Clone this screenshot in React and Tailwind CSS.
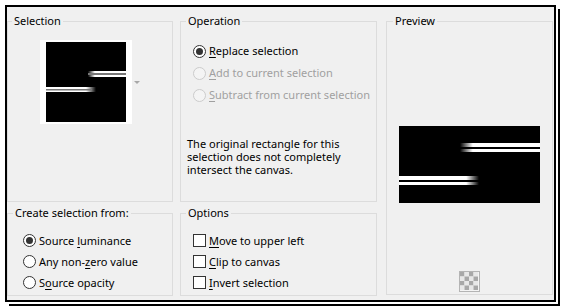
import React from "react";

const font = { fontFamily: '"Noto Sans", "Segoe UI", sans-serif' };

function Radio({ checked, disabled }) {
  return (
    <span
      className={
        "flex items-center justify-center w-[13px] h-[13px] rounded-full border shrink-0 " +
        (disabled ? "border-[#cccccc] bg-[#f4f4f4]" : "border-[#333333] bg-white")
      }
    >
      {checked ? <span className="w-[7px] h-[7px] rounded-full bg-[#333333]" /> : null}
    </span>
  );
}

function Check() {
  return <span className="w-[13px] h-[13px] border border-[#333333] bg-white shrink-0" />;
}

function U({ children }) {
  return <span className="underline underline-offset-[2px] decoration-[1px]">{children}</span>;
}

function Thumb() {
  return (
    <svg width="80" height="80" viewBox="0 0 80 80" className="block">
      <defs>
        <linearGradient id="tfL" x1="0" x2="1">
          <stop offset="0" stopColor="#fff" stopOpacity="0" />
          <stop offset="0.18" stopColor="#fff" stopOpacity="1" />
        </linearGradient>
        <linearGradient id="tfR" x1="0" x2="1">
          <stop offset="0.8" stopColor="#fff" stopOpacity="1" />
          <stop offset="1" stopColor="#fff" stopOpacity="0" />
        </linearGradient>
      </defs>
      <rect width="80" height="80" fill="#000" />
      <rect x="42" y="29" width="38" height="6" fill="url(#tfL)" />
      <rect x="42" y="31" width="38" height="2" fill="#777" />
      <rect x="0" y="45" width="50" height="5" fill="url(#tfR)" />
      <rect x="0" y="47" width="46" height="1.5" fill="#777" />
    </svg>
  );
}

function PreviewImg() {
  return (
    <svg width="141" height="77" viewBox="0 0 141 77" className="block">
      <defs>
        <linearGradient id="pL" x1="0" x2="1">
          <stop offset="0" stopColor="#fff" stopOpacity="0" />
          <stop offset="0.16" stopColor="#fff" stopOpacity="1" />
        </linearGradient>
        <linearGradient id="pR" x1="0" x2="1">
          <stop offset="0.84" stopColor="#fff" stopOpacity="1" />
          <stop offset="1" stopColor="#fff" stopOpacity="0" />
        </linearGradient>
      </defs>
      <rect width="141" height="77" fill="#000" />
      <rect x="61" y="17" width="80" height="4" fill="url(#pL)" />
      <rect x="61" y="23" width="80" height="3" fill="url(#pL)" />
      <rect x="0" y="50" width="80" height="4" fill="url(#pR)" />
      <rect x="0" y="56" width="80" height="3" fill="url(#pR)" />
    </svg>
  );
}

function Checker() {
  const cells = [];
  for (let r = 0; r < 4; r++) {
    for (let c = 0; c < 4; c++) {
      cells.push(
        <rect key={r + "-" + c} x={1 + c * 4.5} y={1 + r * 4.5} width="4.5" height="4.5" fill={(r + c) % 2 === 0 ? "#a8a8a8" : "#e8e8e8"} />
      );
    }
  }
  return (
    <svg width="21" height="21" viewBox="0 0 21 21" className="block">
      <rect x="0.5" y="0.5" width="20" height="20" fill="#f4f4f4" stroke="#b4b4b4" />
      {cells}
    </svg>
  );
}

export default function App() {
  return (
    <div className="w-[561px] h-[307px] bg-white pl-[5px] pt-[5px] text-[11px] leading-[14px] text-black whitespace-nowrap" style={font}>
      <div className="w-[551px] h-[297px] border-2 border-black bg-[#f0f0f0] shadow-[2px_2px_0_0_#fff,4px_4px_0_0_#000] flex pt-[7px]">
        {/* Column 1 */}
        <div className="w-[166px] flex flex-col gap-[4px]">
          <fieldset className="h-[188px] border border-[#dcdcdc]">
            <legend className="ml-[4px] px-[2px]">Selection</legend>
            <div className="flex items-center mt-[12px] ml-[32px]">
              <div className="bg-white px-[6px] py-[2px]">
                <Thumb />
              </div>
              <div className="ml-[2px] w-0 h-0 border-l-[3px] border-r-[3px] border-t-[3px] border-l-transparent border-r-transparent border-t-[#a8a8a8]" />
            </div>
          </fieldset>
          <fieldset className="h-[90px] border border-[#dcdcdc]">
            <legend className="ml-[5px] px-[2px]">Create selection from:</legend>
            <div className="flex flex-col mt-[10px] pl-[15px]">
              <div className="h-[21px] flex items-center gap-[3px]">
                <Radio checked />
                <span>Source <U>l</U>uminance</span>
              </div>
              <div className="h-[21px] flex items-center gap-[3px]">
                <Radio />
                <span>Any non-<U>z</U>ero value</span>
              </div>
              <div className="h-[21px] flex items-center gap-[3px]">
                <Radio />
                <span>S<U>o</U>urce opacity</span>
              </div>
            </div>
          </fieldset>
        </div>

        {/* Column 2 */}
        <div className="w-[197px] ml-[7px] flex flex-col gap-[4px]">
          <fieldset className="h-[188px] border border-[#dcdcdc]">
            <legend className="ml-[5px] px-[2px]">Operation</legend>
            <div className="flex flex-col mt-[12px] pl-[12px]">
              <div className="h-[22px] flex items-center gap-[3px]">
                <Radio checked />
                <span><U>R</U>eplace selection</span>
              </div>
              <div className="h-[22px] flex items-center gap-[3px] text-[#a0a0a0]">
                <Radio disabled />
                <span><U>A</U>dd to current selection</span>
              </div>
              <div className="h-[22px] flex items-center gap-[3px] text-[#a0a0a0]">
                <Radio disabled />
                <span><U>S</U>ubtract from current selection</span>
              </div>
            </div>
            <p className="mt-[31px] pl-[6px] leading-[13px]">
              The original rectangle for this
              <br />
              selection does not completely
              <br />
              intersect the canvas.
            </p>
          </fieldset>
          <fieldset className="h-[90px] border border-[#dcdcdc]">
            <legend className="ml-[5px] px-[2px]">Options</legend>
            <div className="flex flex-col mt-[10px] pl-[12px]">
              <div className="h-[21px] flex items-center gap-[3px]">
                <Check />
                <span><U>M</U>ove to upper left</span>
              </div>
              <div className="h-[21px] flex items-center gap-[3px]">
                <Check />
                <span><U>C</U>lip to canvas</span>
              </div>
              <div className="h-[21px] flex items-center gap-[3px]">
                <Check />
                <span><U>I</U>nvert selection</span>
              </div>
            </div>
          </fieldset>
        </div>

        {/* Column 3 */}
        <div className="w-[167px] ml-[9px]">
          <fieldset className="h-[281px] border border-[#dcdcdc] flex flex-col items-center">
            <legend className="ml-[6px] px-[2px]">Preview</legend>
            <div className="mt-[98px]">
              <PreviewImg />
            </div>
            <div className="mt-[68px]">
              <Checker />
            </div>
          </fieldset>
        </div>
      </div>
    </div>
  );
}
